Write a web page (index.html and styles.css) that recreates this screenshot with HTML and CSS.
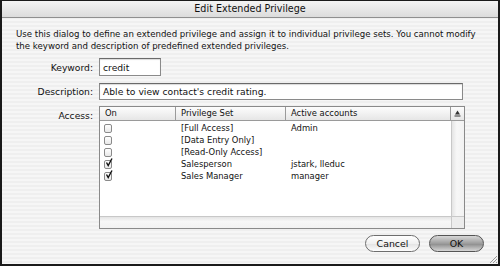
FILE: index.html
```html
<!DOCTYPE html>
<html>
<head>
<meta charset="utf-8">
<link rel="stylesheet" href="styles.css">
</head>
<body>
<div class="window">
  <div class="titlebar">Edit Extended Privilege</div>
  <div class="content">
    <p class="intro">Use this dialog to define an extended privilege and assign it to individual privilege sets. You cannot modify the keyword and description of predefined extended privileges.</p>
    <div class="form">
      <div class="label">Keyword:</div>
      <div class="field keyword">credit</div>
      <div class="label">Description:</div>
      <div class="field desc">Able to view contact's credit rating.</div>
      <div class="label access-label">Access:</div>
      <div class="table">
        <div class="thead">
          <div class="th c-on">On</div>
          <div class="th c-set">Privilege Set</div>
          <div class="th c-acc">Active accounts</div>
          <div class="th c-corner"><svg width="7" height="7" viewBox="0 0 7 7"><path d="M3.5 0.5 L6 4.5 L1 4.5 Z" fill="#333"/><rect x="0.5" y="5.5" width="6" height="1" fill="#333"/></svg></div>
        </div>
        <div class="tbody">
          <div class="rows">
            <div class="row"><div class="c-on"><span class="cb"></span></div><div class="c-set">[Full Access]</div><div class="c-acc">Admin</div></div>
            <div class="row"><div class="c-on"><span class="cb"></span></div><div class="c-set">[Data Entry Only]</div><div class="c-acc"></div></div>
            <div class="row"><div class="c-on"><span class="cb"></span></div><div class="c-set">[Read-Only Access]</div><div class="c-acc"></div></div>
            <div class="row"><div class="c-on"><span class="cb checked"><svg width="8" height="9" viewBox="0 0 8 9"><path d="M1.5 4.5 L3.2 7.5 L7 0.5" fill="none" stroke="#111" stroke-width="1.4"/></svg></span></div><div class="c-set">Salesperson</div><div class="c-acc">jstark, lleduc</div></div>
            <div class="row"><div class="c-on"><span class="cb checked"><svg width="8" height="9" viewBox="0 0 8 9"><path d="M1.5 4.5 L3.2 7.5 L7 0.5" fill="none" stroke="#111" stroke-width="1.4"/></svg></span></div><div class="c-set">Sales Manager</div><div class="c-acc">manager</div></div>
          </div>
          <div class="vscroll"></div>
        </div>
        <div class="hscroll"><div class="htrack"></div><div class="scorner"></div></div>
      </div>
    </div>
    <div class="buttons">
      <div class="btn cancel">Cancel</div>
      <div class="btn ok">OK</div>
    </div>
  </div>
  <div class="grip"><svg width="10" height="10" viewBox="0 0 10 10"><path d="M9 2 L2 9 M9 5 L5 9 M9 8 L8 9" stroke="#999" stroke-width="1"/></svg></div>
</div>
</body>
</html>
```

FILE: styles.css
```css
html, body {
  margin: 0;
  padding: 0;
}
body {
  width: 500px;
  height: 266px;
  overflow: hidden;
  font-family: "DejaVu Sans", "Liberation Sans", sans-serif;
  font-size: 8.4px;
  color: #111;
}
.window {
  position: relative;
  box-sizing: border-box;
  width: 500px;
  height: 266px;
  border-style: solid;
  border-color: #1a1a1a;
  border-width: 1px 2px 2px 2px;
  background: repeating-linear-gradient(to bottom, #efefef 0px, #efefef 2px, #f6f6f6 2px, #f6f6f6 4px);
}
.titlebar {
  height: 16px;
  line-height: 16px;
  text-align: center;
  font-size: 9.6px;
  background: linear-gradient(to bottom, #f4f4f4, #dcdcdc);
  border-bottom: 1px solid #8f8f8f;
}
.content {
  padding: 10px 14px 0 14px;
}
.intro {
  margin: 0;
  line-height: 12px;
  font-size: 8.6px;
}
.form {
  margin-top: 6px;
  display: grid;
  grid-template-columns: 77px auto;
  column-gap: 6px;
  row-gap: 7px;
  align-items: center;
  justify-items: start;
}
.label {
  justify-self: end;
  font-size: 9.2px;
}
.access-label {
  align-self: start;
  margin-top: 3px;
}
.field {
  box-sizing: border-box;
  background: #fff;
  border: 1px solid #8a8a8a;
  border-top-color: #6a6a6a;
  box-shadow: inset 0 1px 1px rgba(0,0,0,0.15);
  font-size: 9.2px;
  padding-left: 3px;
  display: flex;
  align-items: center;
}
.keyword { width: 62px; height: 18px; }
.desc { width: 364px; height: 17px; }
.table {
  box-sizing: border-box;
  width: 366px;
  height: 123px;
  margin-top: -1px;
  border: 1px solid #8a8a8a;
  background: #fff;
  display: flex;
  flex-direction: column;
}
.thead {
  display: flex;
  height: 13px;
  border-bottom: 1px solid #9a9a9a;
  background: linear-gradient(to bottom, #fdfdfd, #e6e6e6);
}
.th {
  box-sizing: border-box;
  line-height: 13px;
  padding-left: 5px;
  border-right: 1px solid #9a9a9a;
}
.c-on { width: 76px; box-sizing: border-box; padding-left: 5px; flex: none; }
.c-set { width: 110px; box-sizing: border-box; padding-left: 5px; flex: none; }
.c-acc { width: 165px; box-sizing: border-box; padding-left: 5px; flex: none; }
.c-corner {
  flex: 1;
  border-right: none;
  padding-left: 0;
  display: flex;
  align-items: center;
  justify-content: center;
}
.tbody {
  flex: 1;
  display: flex;
}
.rows {
  width: 351px;
  padding-top: 1px;
}
.row {
  display: flex;
  height: 12px;
  line-height: 12px;
}
.row .c-on { padding-left: 4px; display: flex; align-items: center; }
.cb {
  box-sizing: border-box;
  width: 8px;
  height: 9px;
  border: 1px solid #8a8a8a;
  border-radius: 2px;
  background: linear-gradient(to bottom, #fff, #e8e8e8);
  position: relative;
}
.cb svg {
  position: absolute;
  left: 0;
  top: -3px;
}
.vscroll {
  flex: 1;
  background: linear-gradient(to right, #e4e4e4, #f7f7f7 40%, #f2f2f2);
  border-left: 1px solid #c8c8c8;
}
.hscroll {
  height: 11px;
  display: flex;
  border-top: 1px solid #c8c8c8;
}
.htrack {
  width: 351px;
  background: linear-gradient(to bottom, #e4e4e4, #f7f7f7 40%, #f2f2f2);
}
.scorner {
  flex: 1;
  background: #ececec;
  border-left: 1px solid #c8c8c8;
}
.buttons {
  display: flex;
  justify-content: flex-end;
  gap: 9px;
  margin-top: 6px;
}
.btn {
  box-sizing: border-box;
  width: 55px;
  height: 17px;
  border-radius: 9px;
  border: 1px solid #6e6e6e;
  display: flex;
  align-items: center;
  justify-content: center;
  font-size: 9.4px;
}
.cancel {
  background: linear-gradient(to bottom, #ffffff, #f0f0f0 50%, #e2e2e2 51%, #fdfdfd);
}
.ok {
  background: linear-gradient(to bottom, #d8d8d8, #9c9c9c 50%, #8a8a8a 51%, #d6d6d6);
  border-color: #555;
}
.grip {
  position: absolute;
  right: 0;
  bottom: 0;
  width: 10px;
  height: 10px;
}
```
